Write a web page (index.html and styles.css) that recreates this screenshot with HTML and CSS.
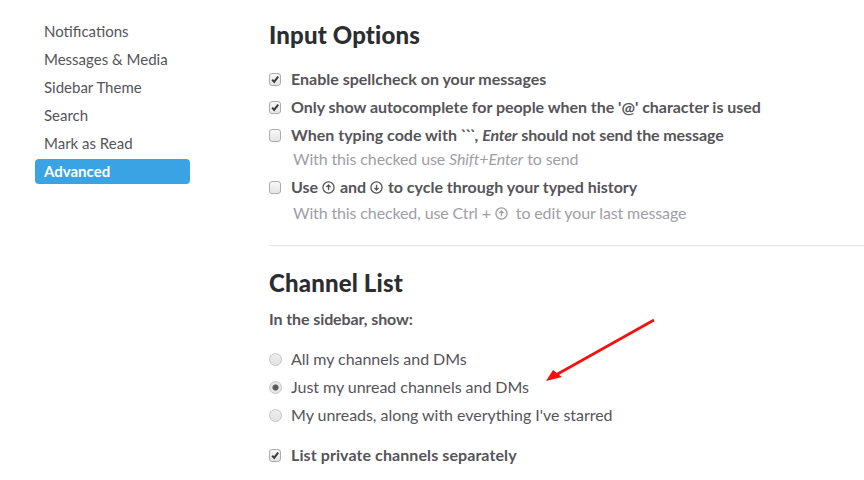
FILE: index.html
```html
<!DOCTYPE html>
<html lang="en">
<head>
    <meta charset="UTF-8">
    <title>Preferences</title>
    <link rel="stylesheet" href="styles.css">
</head>
<body>
    <div class="layout">
        <nav class="sidebar">
            <a class="nav-item">Notifications</a>
            <a class="nav-item">Messages &amp; Media</a>
            <a class="nav-item">Sidebar Theme</a>
            <a class="nav-item">Search</a>
            <a class="nav-item">Mark as Read</a>
            <a class="nav-item active">Advanced</a>
        </nav>
        <main class="content">
            <h2 class="title">Input Options</h2>
            <div class="option bold"><span class="box"><svg viewBox="0 0 11 11"><path d="M2.4 5.6l2.2 2.6L9 2.4"/></svg></span>Enable spellcheck on your messages</div>
            <div class="option bold tight"><span class="box"><svg viewBox="0 0 11 11"><path d="M2.4 5.6l2.2 2.6L9 2.4"/></svg></span>Only show autocomplete for people when the '@' character is used</div>
            <div class="option bold"><span class="box"></span><span>When typing code with <span class="ticks">```</span>, <em class="enter">Enter</em> <span class="rest">should not send the message</span></span></div>
            <div class="hint">With this checked use <em>Shift+Enter</em> to send</div>
            <div class="option bold"><span class="box"></span><span>Use <svg class="key" viewBox="0 0 14 14"><circle cx="7" cy="7" r="6"/><path d="M7 10V4.5M4.7 6.6L7 4.3l2.3 2.3"/></svg> and <svg class="key" viewBox="0 0 14 14"><circle cx="7" cy="7" r="6"/><path d="M7 4V9.5M4.7 7.4L7 9.7l2.3-2.3"/></svg> to cycle through your typed history</span></div>
            <div class="hint hint-last">With this checked, use Ctrl + <svg class="key key-last" viewBox="0 0 14 14"><circle cx="7" cy="7" r="6"/><path d="M7 10V4.5M4.7 6.6L7 4.3l2.3 2.3"/></svg> to edit your last message</div>
            <hr class="divider">
            <h2 class="title">Channel List</h2>
            <div class="subhead">In the sidebar, show:</div>
            <div class="option regular"><span class="radio"></span>All my channels and DMs</div>
            <div class="option regular"><span class="radio selected"></span>Just my unread channels and DMs</div>
            <div class="option regular"><span class="radio"></span>My unreads, along with everything I've starred</div>
            <div class="option bold spaced"><span class="box"><svg viewBox="0 0 11 11"><path d="M2.4 5.6l2.2 2.6L9 2.4"/></svg></span>List private channels separately</div>
        </main>
    </div>
    <svg class="arrow" width="120" height="70" viewBox="0 0 120 70">
        <path d="M112 6L12 62" stroke="#f51010" stroke-width="2.6" fill="none"/>
        <path d="M4 67L20 63L11 56Z" fill="#f51010"/>
    </svg>
</body>
</html>
```

FILE: styles.css
```css
* {
    box-sizing: border-box;
}
html, body {
    height: 480px;
    overflow: hidden;
}
body {
    margin: 0;
    background: #fff;
    color: #555459;
    font-family: Lato, sans-serif;
    font-size: 16px;
    line-height: 28px;
}
.layout {
    display: flex;
}
.sidebar {
    width: 155px;
    margin: 17px 0 0 35px;
    flex-shrink: 0;
}
.nav-item {
    display: block;
    height: 28px;
    padding-left: 9px;
    font-size: 15px;
    color: #555459;
}
.nav-item.active {
    height: 25px;
    margin-top: 2px;
    line-height: 25px;
    background: #3aa3e3;
    color: #fff;
    font-weight: 700;
    border-radius: 4px;
}
.content {
    flex: 1;
    margin-left: 79px;
    min-width: 0;
}
.title {
    margin: 0;
    color: #2c2d30;
    font-size: 24px;
    font-weight: 900;
    line-height: 34px;
    letter-spacing: 0.16px;
}
.content > .title:first-child {
    margin-top: 18px;
    margin-bottom: 13px;
}
.option {
    display: flex;
    align-items: center;
    height: 28px;
    white-space: pre-wrap;
}
.bold {
    font-weight: 700;
}
.tight {
    letter-spacing: -0.03px;
}
.regular {
    letter-spacing: -0.04px;
}
.ticks {
    letter-spacing: -1.8px;
}
.enter {
    letter-spacing: -0.2px;
}
.rest {
    letter-spacing: -0.1px;
}
.box {
    width: 12px;
    height: 13px;
    margin-right: 10px;
    flex-shrink: 0;
    background: linear-gradient(#f8f8f8, #e4e4e4);
    border: 1px solid #acacac;
    border-radius: 3px;
}
.box svg {
    display: block;
    width: 10px;
    height: 11px;
    fill: none;
    stroke: #3a3a3a;
    stroke-width: 2.2;
}
.radio {
    width: 13px;
    height: 13px;
    margin-right: 9px;
    flex-shrink: 0;
    background: linear-gradient(#ececec, #e4e4e4);
    border: 1px solid #c4c4c4;
    border-radius: 50%;
}
.radio.selected {
    background: radial-gradient(circle, #5a5a5a 0, #5a5a5a 2.6px, #e6e6e6 3.5px);
}
.hint {
    height: 24px;
    line-height: 24px;
    padding-left: 24px;
    margin-top: -2px;
    margin-bottom: 2px;
    color: #9e9ea6;
    letter-spacing: -0.13px;
}
.hint-last {
    margin-top: 0;
    margin-bottom: 0;
}
.key {
    width: 13px;
    height: 13px;
    margin: 0 1px 0 0;
    vertical-align: -1px;
    fill: none;
    stroke: currentColor;
    stroke-width: 1.4;
}
.key-last {
    margin-right: 4px;
}
.divider {
    height: 1px;
    margin: 20px 0 0;
    border: 0;
    background: #e3e3e3;
}
.divider + .title {
    margin-top: 20px;
}
.subhead {
    font-weight: 700;
    margin-top: 5px;
    margin-bottom: 12px;
    letter-spacing: -0.1px;
}
.spaced {
    margin-top: 12px;
    letter-spacing: 0.09px;
}
.arrow {
    position: absolute;
    left: 542px;
    top: 314px;
}
```
